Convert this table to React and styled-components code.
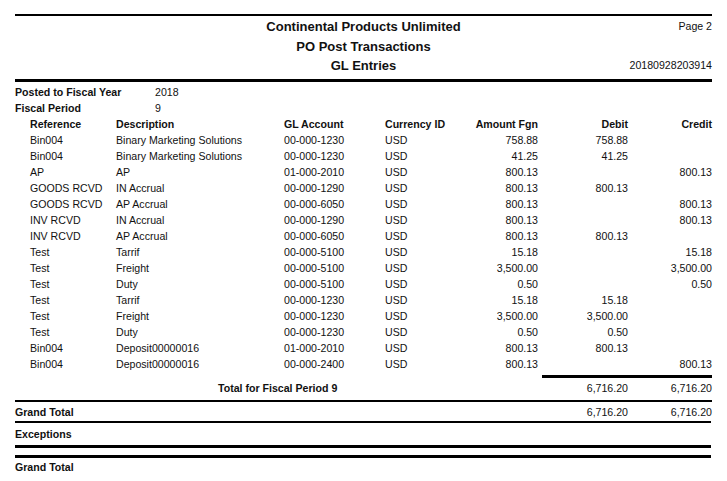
import React from "react";
import styled, { createGlobalStyle } from "styled-components";

const Global = createGlobalStyle`
  html, body { margin: 0; padding: 0; background: #fff; }
  body {
    font-family: "Liberation Sans", Arial, sans-serif;
    color: #111;
    font-size: 10.6px;
  }
`;

const Page = styled.div`
  width: 697px;
  padding: 14px 0 0 15px;
`;

const Rule = styled.div`
  height: ${(p) => p.$h || 2}px;
  background: #000;
  margin-left: ${(p) => p.$ml || 0}px;
  margin-right: ${(p) => p.$mr || 0}px;
  margin-top: ${(p) => p.$mt || 0}px;
`;

const TitleBlock = styled.div`
  display: grid;
  grid-template-columns: 1fr auto 1fr;
  grid-template-rows: 20px 20px 18px;
  padding-bottom: 5px;
  align-items: center;
`;

const Title = styled.div`
  grid-column: 2;
  grid-row: ${(p) => p.$row};
  font-weight: bold;
  font-size: 13px;
  text-align: center;
`;

const Side = styled.div`
  grid-column: 3;
  grid-row: ${(p) => p.$row};
  text-align: right;
  margin-top: ${(p) => p.$mt || 0}px;
`;

const InfoRow = styled.div`
  display: grid;
  grid-template-columns: 140px 1fr;
  height: 16px;
  align-items: center;
`;

const Label = styled.span`
  font-weight: bold;
`;

const cols = "15px 86px 168px 101px 60px 93px 90px 84px";

const Row = styled.div`
  display: grid;
  grid-template-columns: ${cols};
  height: ${(p) => p.$h || 16}px;
  align-items: center;
  font-weight: ${(p) => (p.$bold ? "bold" : "normal")};
  white-space: nowrap;
`;

const Cell = styled.span`
  grid-column: ${(p) => p.$col};
  text-align: ${(p) => (p.$right ? "right" : "left")};
`;

const SpanLabel = styled.span`
  grid-column: 1 / 6;
  padding-left: ${(p) => p.$pl || 0}px;
  font-weight: bold;
`;

const Spacer = styled.div`
  height: ${(p) => p.$h}px;
`;

const rows = [
  ["Bin004", "Binary Marketing Solutions", "00-000-1230", "758.88", "758.88", ""],
  ["Bin004", "Binary Marketing Solutions", "00-000-1230", "41.25", "41.25", ""],
  ["AP", "AP", "01-000-2010", "800.13", "", "800.13"],
  ["GOODS RCVD", "IN Accrual", "00-000-1290", "800.13", "800.13", ""],
  ["GOODS RCVD", "AP Accrual", "00-000-6050", "800.13", "", "800.13"],
  ["INV RCVD", "IN Accrual", "00-000-1290", "800.13", "", "800.13"],
  ["INV RCVD", "AP Accrual", "00-000-6050", "800.13", "800.13", ""],
  ["Test", "Tarrif", "00-000-5100", "15.18", "", "15.18"],
  ["Test", "Freight", "00-000-5100", "3,500.00", "", "3,500.00"],
  ["Test", "Duty", "00-000-5100", "0.50", "", "0.50"],
  ["Test", "Tarrif", "00-000-1230", "15.18", "15.18", ""],
  ["Test", "Freight", "00-000-1230", "3,500.00", "3,500.00", ""],
  ["Test", "Duty", "00-000-1230", "0.50", "0.50", ""],
  ["Bin004", "Deposit00000016", "01-000-2010", "800.13", "800.13", ""],
  ["Bin004", "Deposit00000016", "00-000-2400", "800.13", "", "800.13"],
];

export default function App() {
  return (
    <>
      <Global />
      <Page>
        <Rule $h={2} />
        <TitleBlock>
          <Title $row={1}>Continental Products Unlimited</Title>
          <Title $row={2}>PO Post Transactions</Title>
          <Title $row={3}>GL Entries</Title>
          <Side $row={1}>Page 2</Side>
          <Side $row={3}>20180928203914</Side>
        </TitleBlock>
        <Rule $h={3} />
        <Spacer $h={2} />
        <InfoRow>
          <Label>Posted to Fiscal Year</Label>
          <span>2018</span>
        </InfoRow>
        <InfoRow>
          <Label>Fiscal Period</Label>
          <span>9</span>
        </InfoRow>
        <Row $bold $h={16}>
          <Cell $col={2}>Reference</Cell>
          <Cell $col={3}>Description</Cell>
          <Cell $col={4}>GL Account</Cell>
          <Cell $col={5}>Currency ID</Cell>
          <Cell $col={6} $right>Amount Fgn</Cell>
          <Cell $col={7} $right>Debit</Cell>
          <Cell $col={8} $right>Credit</Cell>
        </Row>
        {rows.map((r, i) => (
          <Row key={i}>
            <Cell $col={2}>{r[0]}</Cell>
            <Cell $col={3}>{r[1]}</Cell>
            <Cell $col={4}>{r[2]}</Cell>
            <Cell $col={5}>USD</Cell>
            <Cell $col={6} $right>{r[3]}</Cell>
            <Cell $col={7} $right>{r[4]}</Cell>
            <Cell $col={8} $right>{r[5]}</Cell>
          </Row>
        ))}
        <Rule $h={3} $ml={527} $mt={3} />
        <Row $h={20}>
          <SpanLabel $pl={203}>Total for Fiscal Period 9</SpanLabel>
          <Cell $col={7} $right>6,716.20</Cell>
          <Cell $col={8} $right>6,716.20</Cell>
        </Row>
        <Spacer $h={2} />
        <Rule $h={2} />
        <Row $h={19}>
          <SpanLabel>Grand Total</SpanLabel>
          <Cell $col={7} $right>6,716.20</Cell>
          <Cell $col={8} $right>6,716.20</Cell>
        </Row>
        <Rule $h={2} $mr={1} />
        <Row $h={22}>
          <SpanLabel>Exceptions</SpanLabel>
        </Row>
        <Rule $h={3} $mr={1} />
        <Spacer $h={7} />
        <Rule $h={3} $mr={1} />
        <Row $h={18}>
          <SpanLabel>Grand Total</SpanLabel>
        </Row>
      </Page>
    </>
  );
}
